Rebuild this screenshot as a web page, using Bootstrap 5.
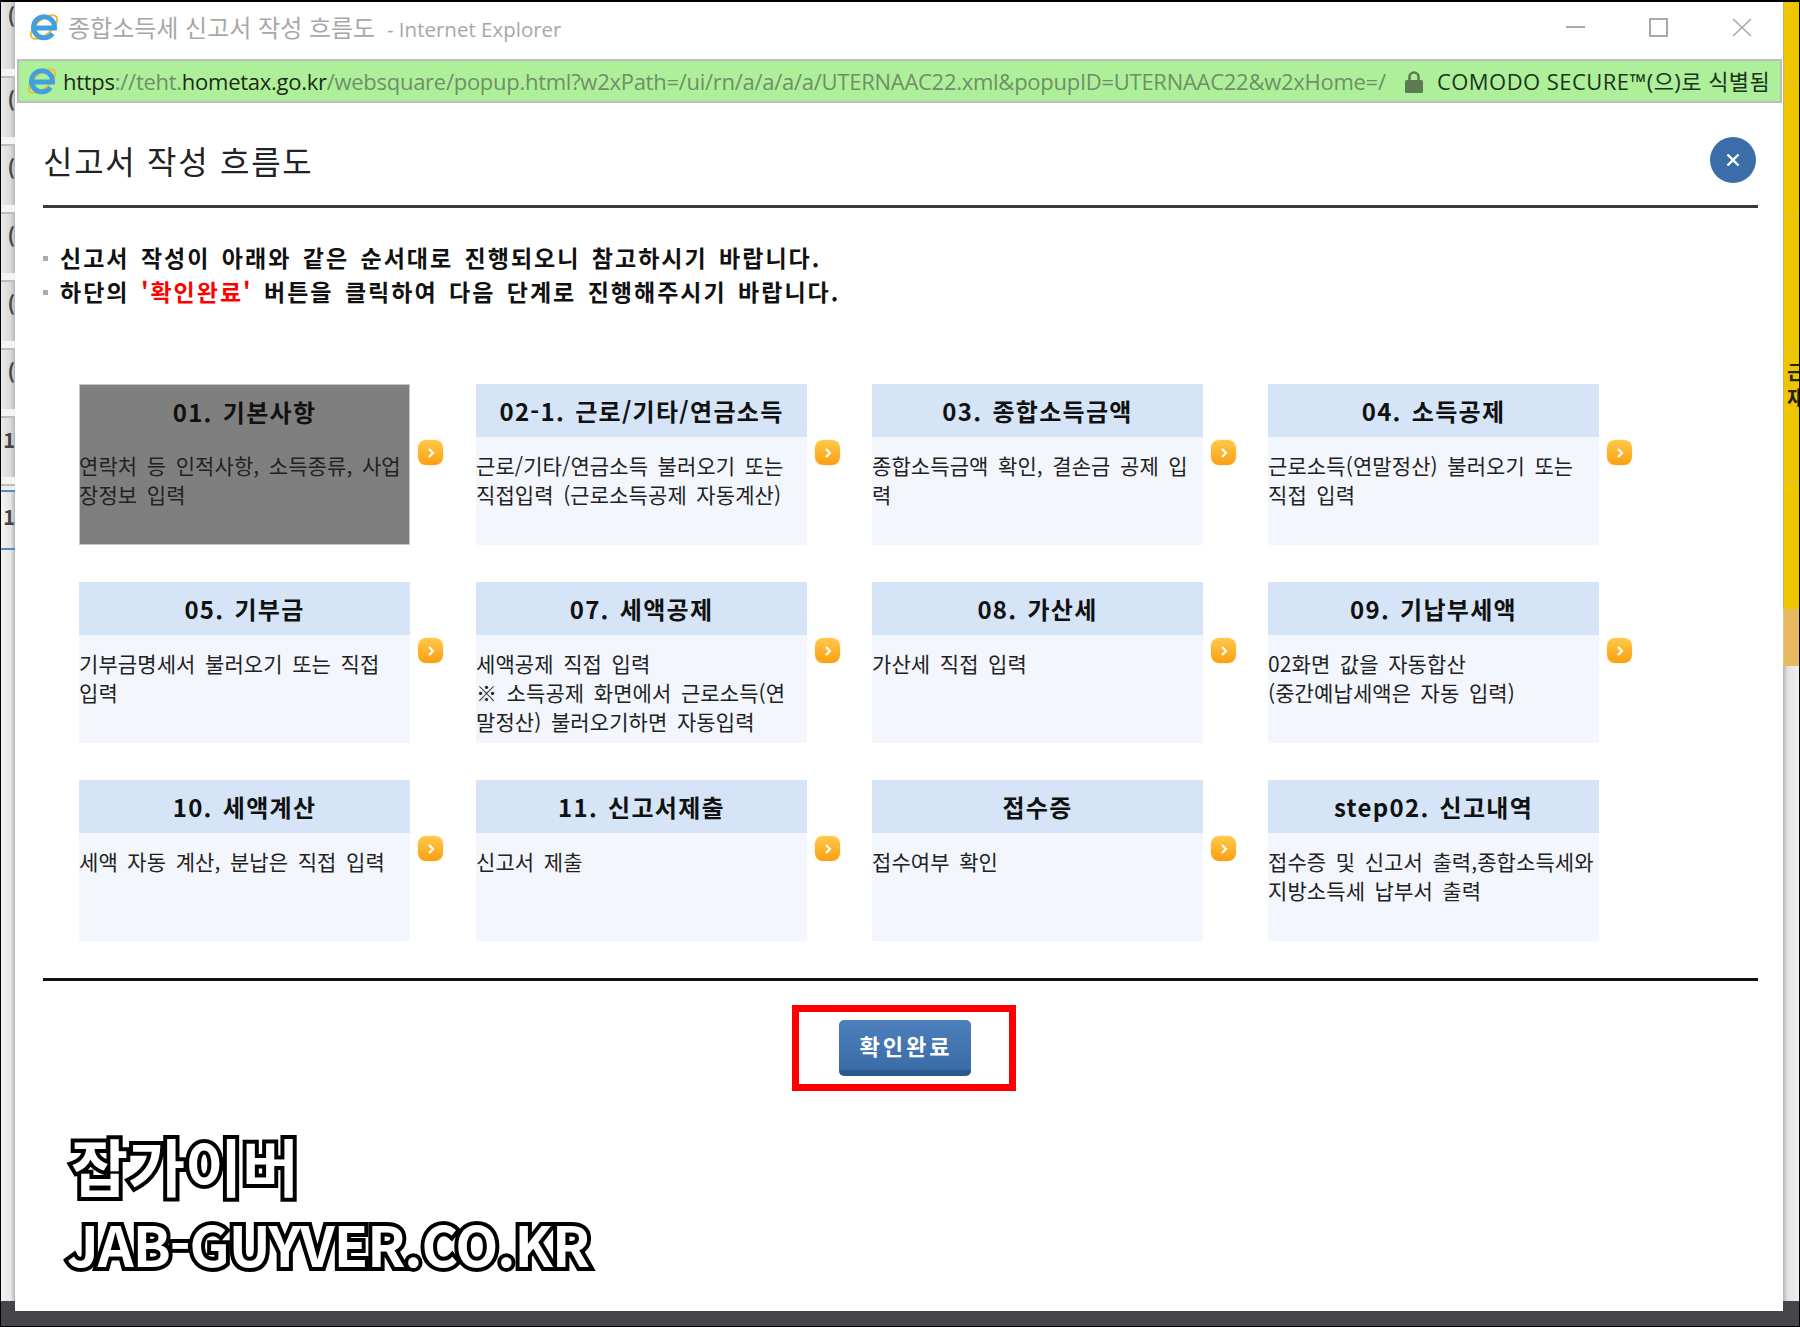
<!DOCTYPE html>
<html lang="ko"><head><meta charset="utf-8"><title>신고서 작성 흐름도</title>
<link href="https://cdn.jsdelivr.net/npm/bootstrap@5.3.0/dist/css/bootstrap.min.css" rel="stylesheet">
<style>
html,body{height:1327px;margin:0;overflow:hidden;background:#45464c;}
body{font-family:"Noto Sans CJK KR","Noto Sans",sans-serif;color:#1c1c1c;}
.shot{height:1327px;border:1px solid #000;border-top-width:2px;}
.side-left{width:14px;height:1299px;overflow:hidden;background:#e6e6e6;font-size:20px;font-weight:600;color:#444;}
.siderow{height:68px;padding:0;text-align:right;line-height:44px;background:linear-gradient(90deg,#e9e9e9,#d9d9d9 70%,#b4b4b4);border-bottom:2px solid #bbb;box-shadow:inset 0 -7px 0 #f4f4f4;}
.siderow.first{height:76px;line-height:28px;}
.siderow.thin{height:6px;box-shadow:none;background:#eee;border-bottom-color:#5d86c4;}
.siderow.blue{height:58px;box-shadow:none;line-height:50px;background:linear-gradient(90deg,#f4f4f4,#e4e4e4 70%,#b4b4b4);border-bottom-color:#5d86c4;}
.sidetail{height:760px;background:linear-gradient(90deg,#f2f2f2,#e6e6e6 70%,#b4b4b4);}
.side-right{width:16px;height:1299px;overflow:hidden;font-size:20px;line-height:26px;font-weight:700;color:#222;}
.ytop{height:607px;background:repeating-linear-gradient(#efc500 0 132px,#d6c25a 132px 133px) 0 -52px;border-left:1px solid #c9b36b;padding:357px 0 0 3px;white-space:nowrap;}
.ymid{height:57px;background:#e9b863;border-left:1px solid #d5cf72;border-top:1px solid #cfc860;}
.ylow{height:635px;background:linear-gradient(90deg,#b4b4b4,#e4e4e4 30%,#eee);}
.win{width:1768px;height:1309px;background:#fff;}
.titlebar{height:57px;padding:0 0 7px 14px;color:#a8a8a8;font-size:24px;gap:9px;}
.titlebar .en{font-family:"Open Sans","Noto Sans",sans-serif;font-size:20.5px;margin-left:5px;}
.winbtns{margin-left:auto;gap:64px;padding-right:31px;}
.urlbar{height:44px;margin:0 1px 0 2px;background:#aef09a;border:2px solid #bdbdbd;padding-left:8px;font-size:22px;white-space:nowrap;color:#6f8f68;font-family:"Open Sans","Noto Sans CJK KR",sans-serif;letter-spacing:-.27px;}
.urlbar b{font-weight:400;color:#1d2a1a;}
.url{width:1324px;overflow:hidden;margin-left:6px;flex:none;}
.lockic{margin-left:18px;}
.secure{color:#203220;margin-left:14px;letter-spacing:.45px;}
.content{padding:0 25px 0 28px;}
.head{height:105px;padding-top:12px;border-bottom:3px solid #3b3b3b;}
.head h1{font-size:32px;font-weight:400;margin:0;letter-spacing:1.7px;color:#222;}
.xbtn{width:46px;height:46px;border-radius:50%;background:#3b6ea8;margin-right:2px;}
.notes{margin:32px 0 0;padding:0;list-style:none;font-size:23px;font-weight:700;line-height:34px;letter-spacing:2px;word-spacing:3px;color:#111;white-space:nowrap;}
.notes li{padding-left:17px;position:relative;}
.notes li::before{content:"";position:absolute;left:0;top:16px;width:5px;height:5px;background:#aaa;}
.notes em{font-style:normal;color:#f00;}
.flow{margin:76px 0 0 36px;display:grid;grid-template-columns:397px 396px 396px 396px;row-gap:37px;}
.stepwrap{display:flex;align-items:flex-start;}
.step{width:331px;height:161px;background:#f3f7fd;flex:none;}
.step h2{height:53px;margin:0;background:#d5e5f7;font-size:24px;font-weight:700;line-height:54px;text-align:center;letter-spacing:1.3px;word-spacing:2px;color:#111;white-space:nowrap;}
.step p{margin:14px 0 0;font-size:21px;line-height:29px;color:#222;letter-spacing:.1px;word-spacing:3.5px;white-space:nowrap;}
.step.on{background:#7f7f7f;border:1px solid #c6c6c6;}
.step.on h2{background:#7f7f7f;height:52px;line-height:53px;}
.step.on p{margin-left:-1px;}
.arrow{width:25px;height:25px;border-radius:8px;margin:56px 0 0 8px;background:linear-gradient(#ffc94a,#fb9f12);box-shadow:0 0 2px #ffd9a0;}
.foot{border-top:3px solid #111;margin-top:37px;}
.redbox{width:224px;height:86px;margin:24px 0 0 749px;border:7px solid #f00;padding-left:1px;}
.okbtn{width:132px;height:56px;border:0;border-radius:5px;padding:0 0 6px 3px;background:linear-gradient(#4d7fbd,#3a6ca8 90%,#2c5a90 90%);color:#fff;font-size:22px;font-weight:700;letter-spacing:3px;}
.okbtn:hover{background:#3a6ca8;color:#fff;}
.wm{font-weight:700;color:#fff;-webkit-text-stroke:8px #000;paint-order:stroke fill;line-height:1;white-space:nowrap;}
.wm1{font-size:62px;letter-spacing:0;margin:43px 0 0 28px;}
.wm2{font-size:56px;letter-spacing:-1px;margin:19px 0 0 24px;}
</style></head><body>
<div class="shot d-flex align-items-start">
<div class="side-left flex-shrink-0">
 <div class="siderow first">(</div><div class="siderow">(</div><div class="siderow">(</div><div class="siderow">(</div><div class="siderow">(</div><div class="siderow">(</div><div class="siderow">1</div><div class="siderow thin"></div><div class="siderow blue">1</div><div class="sidetail"></div>
</div>
<div class="win d-flex flex-column flex-shrink-0">
 <div class="titlebar d-flex align-items-center">
  <svg width="30" height="30" viewBox="0 0 30 30" class="flex-shrink-0"><ellipse cx="15" cy="15" rx="16" ry="7.5" transform="rotate(-40 15 15)" fill="none" stroke="#f0bd2c" stroke-width="2"/><path d="M23.5 21.5A10.5 10.5 0 1 1 25.5 16H6" fill="none" stroke="#419fdd" stroke-width="5"/></svg>
  <span>종합소득세 신고서 작성 흐름도 <span class="en">- Internet Explorer</span></span>
  <div class="winbtns d-flex align-items-center">
   <svg width="19" height="3"><rect width="19" height="2" fill="#a9a9a9"/></svg>
   <svg width="19" height="19"><rect x="1" y="1" width="17" height="17" fill="none" stroke="#a9a9a9" stroke-width="2"/></svg>
   <svg width="20" height="19"><path d="M1 1l18 17M19 1L1 18" stroke="#a9a9a9" stroke-width="1.6"/></svg>
  </div>
 </div>
 <div class="urlbar d-flex align-items-center">
  <svg width="30" height="30" viewBox="0 0 30 30" class="flex-shrink-0"><ellipse cx="15" cy="15" rx="16" ry="7.5" transform="rotate(-40 15 15)" fill="none" stroke="#f0bd2c" stroke-width="2"/><path d="M23.5 21.5A10.5 10.5 0 1 1 25.5 16H6" fill="none" stroke="#419fdd" stroke-width="5"/></svg>
  <div class="url"><b>https</b>://teht.<b>hometax.go.kr</b>/websquare/popup.html?w2xPath=/ui/rn/a/a/a/a/UTERNAAC22.xml&amp;popupID=UTERNAAC22&amp;w2xHome=/</div>
  <svg width="18" height="23" viewBox="0 0 18 23" class="lockic flex-shrink-0"><path d="M4.5 11V7a4.5 4.5 0 0 1 9 0V11" fill="none" stroke="#5d7a52" stroke-width="2.6"/><rect y="10" width="18" height="13" rx="1.5" fill="#5d7a52"/></svg>
  <span class="secure">COMODO SECURE™(으)로 식별됨</span>
 </div>
 <div class="content">
  <div class="head d-flex align-items-center justify-content-between">
   <h1>신고서 작성 흐름도</h1>
   <div class="xbtn d-flex align-items-center justify-content-center"><svg width="16" height="16"><path d="M2.5 2.5l11 11M13.5 2.5l-11 11" stroke="#fff" stroke-width="2.4"/></svg></div>
  </div>
  <ul class="notes">
   <li>신고서 작성이 아래와 같은 순서대로 진행되오니 참고하시기 바랍니다.</li>
   <li>하단의 <em>'확인완료'</em> 버튼을 클릭하여 다음 단계로 진행해주시기 바랍니다.</li>
  </ul>
  <div class="flow">
   <div class="stepwrap"><div class="step on"><h2>01. 기본사항</h2><p>연락처 등 인적사항, 소득종류, 사업<br>장정보 입력</p></div><div class="arrow d-flex align-items-center justify-content-center"><svg width="10" height="12"><path d="M3 2l4 4-4 4" fill="none" stroke="#fff" stroke-width="2.2"/></svg></div></div>
   <div class="stepwrap"><div class="step"><h2>02-1. 근로/기타/연금소득</h2><p>근로/기타/연금소득 불러오기 또는<br>직접입력 (근로소득공제 자동계산)</p></div><div class="arrow d-flex align-items-center justify-content-center"><svg width="10" height="12"><path d="M3 2l4 4-4 4" fill="none" stroke="#fff" stroke-width="2.2"/></svg></div></div>
   <div class="stepwrap"><div class="step"><h2>03. 종합소득금액</h2><p>종합소득금액 확인, 결손금 공제 입<br>력</p></div><div class="arrow d-flex align-items-center justify-content-center"><svg width="10" height="12"><path d="M3 2l4 4-4 4" fill="none" stroke="#fff" stroke-width="2.2"/></svg></div></div>
   <div class="stepwrap"><div class="step"><h2>04. 소득공제</h2><p>근로소득(연말정산) 불러오기 또는<br>직접 입력</p></div><div class="arrow d-flex align-items-center justify-content-center"><svg width="10" height="12"><path d="M3 2l4 4-4 4" fill="none" stroke="#fff" stroke-width="2.2"/></svg></div></div>
   <div class="stepwrap"><div class="step"><h2>05. 기부금</h2><p>기부금명세서 불러오기 또는 직접<br>입력</p></div><div class="arrow d-flex align-items-center justify-content-center"><svg width="10" height="12"><path d="M3 2l4 4-4 4" fill="none" stroke="#fff" stroke-width="2.2"/></svg></div></div>
   <div class="stepwrap"><div class="step"><h2>07. 세액공제</h2><p>세액공제 직접 입력<br>※ 소득공제 화면에서 근로소득(연<br>말정산) 불러오기하면 자동입력</p></div><div class="arrow d-flex align-items-center justify-content-center"><svg width="10" height="12"><path d="M3 2l4 4-4 4" fill="none" stroke="#fff" stroke-width="2.2"/></svg></div></div>
   <div class="stepwrap"><div class="step"><h2>08. 가산세</h2><p>가산세 직접 입력</p></div><div class="arrow d-flex align-items-center justify-content-center"><svg width="10" height="12"><path d="M3 2l4 4-4 4" fill="none" stroke="#fff" stroke-width="2.2"/></svg></div></div>
   <div class="stepwrap"><div class="step"><h2>09. 기납부세액</h2><p>02화면 값을 자동합산<br>(중간예납세액은 자동 입력)</p></div><div class="arrow d-flex align-items-center justify-content-center"><svg width="10" height="12"><path d="M3 2l4 4-4 4" fill="none" stroke="#fff" stroke-width="2.2"/></svg></div></div>
   <div class="stepwrap"><div class="step"><h2>10. 세액계산</h2><p>세액 자동 계산, 분납은 직접 입력</p></div><div class="arrow d-flex align-items-center justify-content-center"><svg width="10" height="12"><path d="M3 2l4 4-4 4" fill="none" stroke="#fff" stroke-width="2.2"/></svg></div></div>
   <div class="stepwrap"><div class="step"><h2>11. 신고서제출</h2><p>신고서 제출</p></div><div class="arrow d-flex align-items-center justify-content-center"><svg width="10" height="12"><path d="M3 2l4 4-4 4" fill="none" stroke="#fff" stroke-width="2.2"/></svg></div></div>
   <div class="stepwrap"><div class="step"><h2>접수증</h2><p>접수여부 확인</p></div><div class="arrow d-flex align-items-center justify-content-center"><svg width="10" height="12"><path d="M3 2l4 4-4 4" fill="none" stroke="#fff" stroke-width="2.2"/></svg></div></div>
   <div class="stepwrap"><div class="step"><h2>step02. 신고내역</h2><p>접수증 및 신고서 출력,종합소득세와<br>지방소득세 납부서 출력</p></div></div>
  </div>
  <div class="foot">
   <div class="redbox d-flex align-items-center justify-content-center"><button type="button" class="btn okbtn">확인완료</button></div>
  </div>
  <div class="wm wm1">잡가이버</div>
  <div class="wm wm2">JAB-GUYVER.CO.KR</div>
 </div>
</div>
<div class="side-right flex-shrink-0"><div class="ytop">근<br>재</div><div class="ymid"></div><div class="ylow"></div></div>
</div>
</body></html>
